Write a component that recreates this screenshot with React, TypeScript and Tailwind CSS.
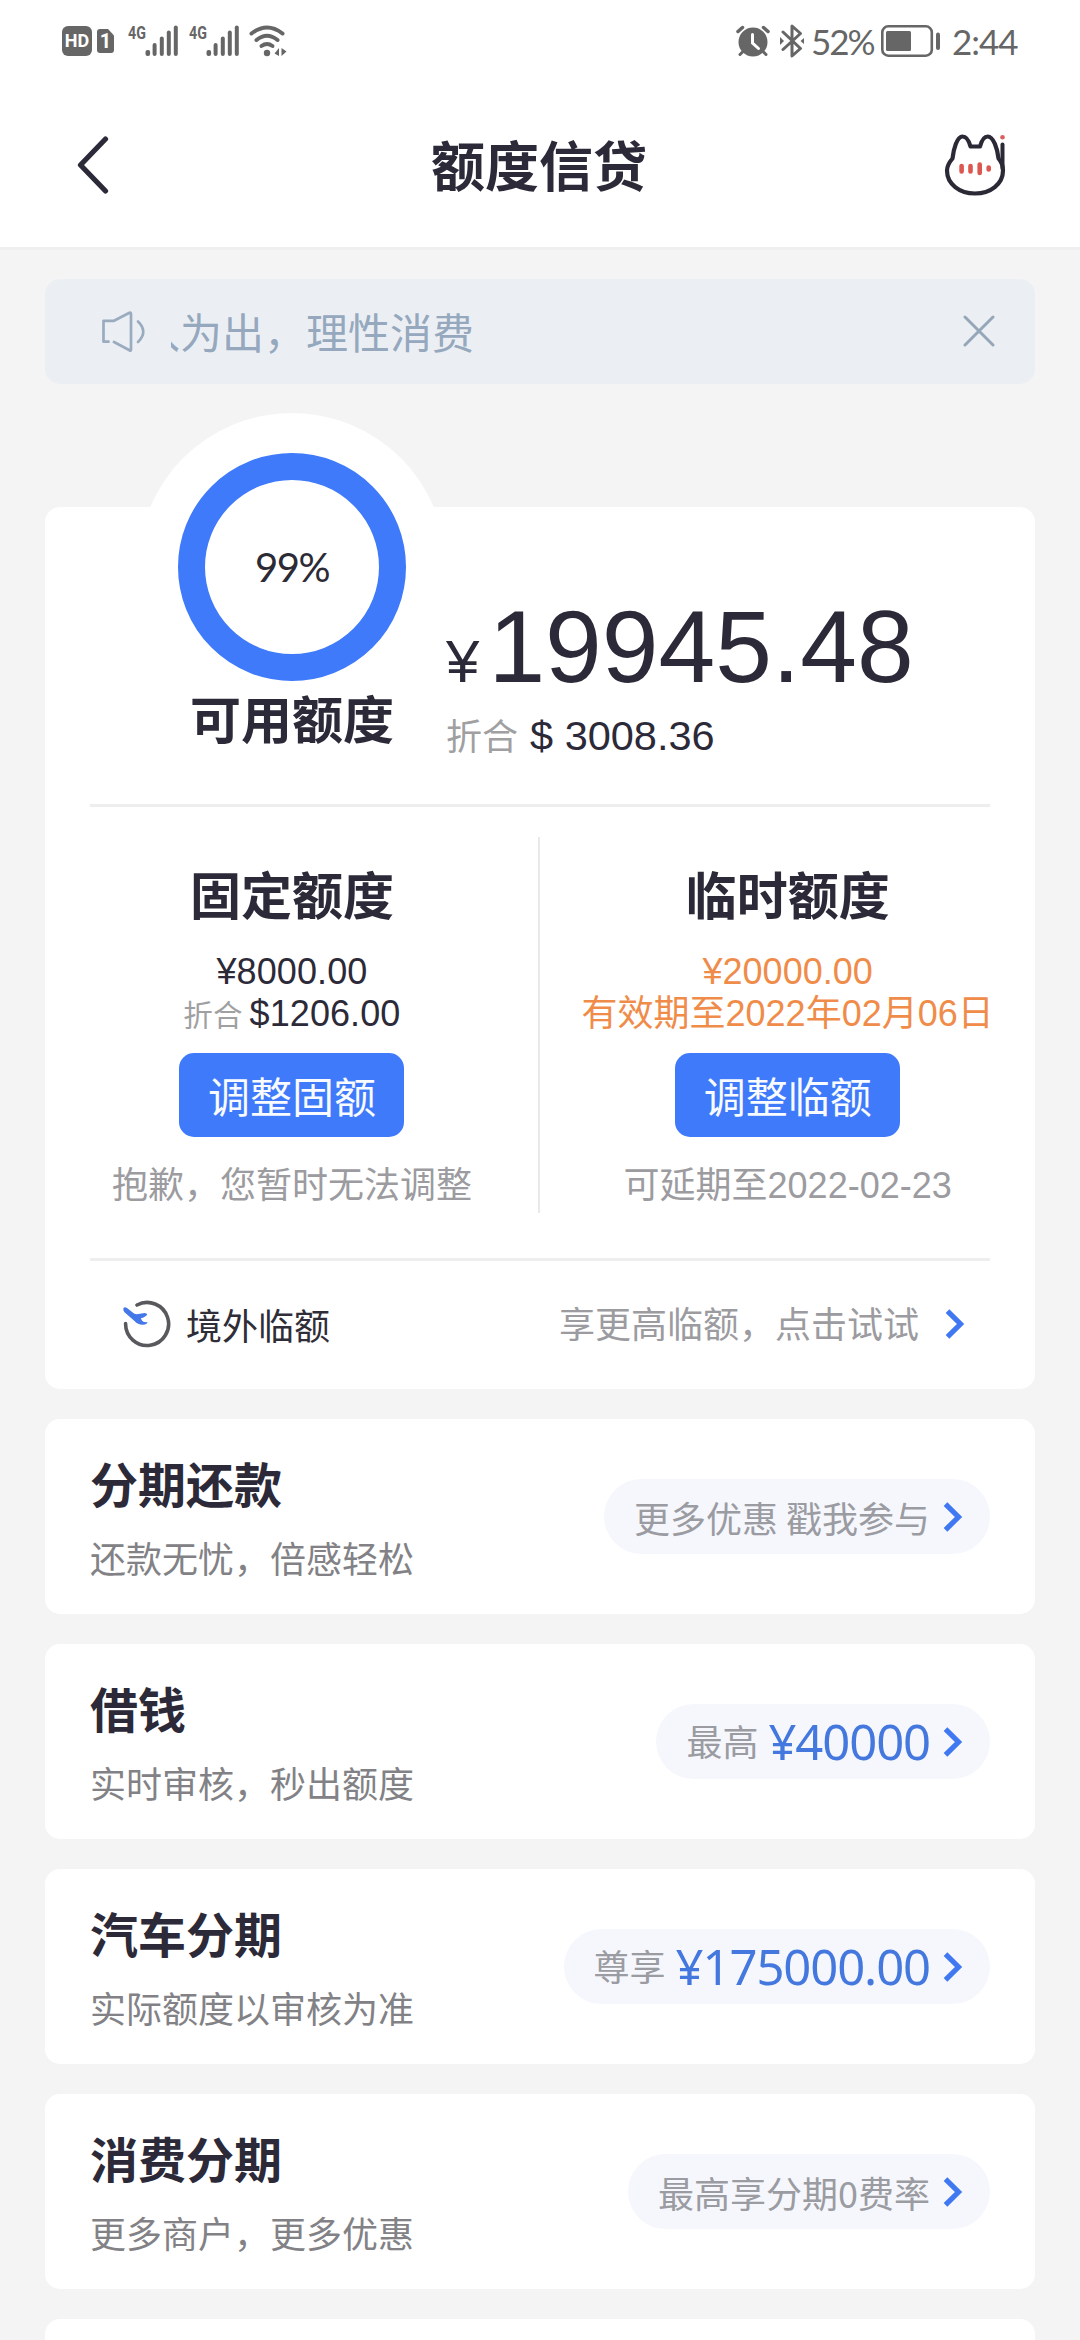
import React from "react";

const CJK = "font-['Noto_Sans_CJK_SC',sans-serif]";
const ARIAL = "font-['Liberation_Sans','Noto_Sans_CJK_SC',sans-serif]";

function SignalBars() {
  return (
    <svg width="33" height="32" viewBox="0 0 33 32" className="shrink-0 fill-[#666]">
      <rect x="0.5" y="25" width="4.6" height="6" rx="2" />
      <rect x="7.6" y="18" width="4" height="13" rx="2" />
      <rect x="14.8" y="11.5" width="4" height="19.5" rx="2" />
      <rect x="21.8" y="5.5" width="4" height="25.5" rx="2" />
      <rect x="28.8" y="0.5" width="4" height="30.5" rx="2" />
    </svg>
  );
}

function Signal() {
  return (
    <div className="flex h-8 w-[50px] items-start">
      <span className="w-[17px] shrink-0 origin-top-left scale-x-[0.75] font-['Roboto',sans-serif] text-[19px] leading-[15px] font-bold">
        4G
      </span>
      <SignalBars />
    </div>
  );
}

function StatusBar() {
  return (
    <div className="flex h-[82px] items-center justify-between pr-[63px] pl-[62px] text-[#666]">
      <div className="flex items-center">
        <div className="flex h-[30px] w-[30px] items-center justify-center rounded-[6px] bg-[#666] font-['Roboto',sans-serif] text-[18px] leading-none font-bold text-white">
          HD
        </div>
        <div className="relative ml-[5px] flex h-6 w-[17px] items-center justify-center">
          <svg width="17" height="24" viewBox="0 0 17 24" className="absolute inset-0 fill-[#666]">
            <path d="M3 0H11L17 6.500V21A3 3 0 0 1 14 24H3A3 3 0 0 1 0 21V3A3 3 0 0 1 3 0Z" />
          </svg>
          <span className="relative font-['Roboto',sans-serif] text-[20px] leading-none font-bold text-white">1</span>
        </div>
        <div className="ml-[14px]">
          <Signal />
        </div>
        <div className="ml-[11px]">
          <Signal />
        </div>
        <svg width="39" height="32" viewBox="0 0 39 32" className="ml-[10px]" fill="none" stroke="#666" strokeWidth="4" strokeLinecap="round">
          <path d="M2.500 8.500Q18 -3.500 33.500 8.500" />
          <path d="M7.500 15Q18 6.500 28.500 15" />
          <path d="M12.500 21Q18 17 23.500 21" />
          <circle cx="18" cy="28" r="3.200" fill="#666" stroke="none" />
          <path d="M30 23V31L25.500 28.500ZM32.500 23V31L37.500 26.500Z" fill="#666" stroke="none" />
        </svg>
      </div>
      <div className="flex items-center">
        <svg width="34" height="32" viewBox="0 0 34 32" fill="none" stroke="#666" strokeLinecap="round">
          <circle cx="17" cy="17" r="14.500" fill="#666" stroke="none" />
          <path d="M2 6.500L6.500 2.500M32 6.500L27.500 2.500" strokeWidth="3.500" />
          <path d="M6.500 27L4 29.500M27.500 27L30 29.500" strokeWidth="3" />
          <path d="M16.500 9.500V18L22.500 23.500" stroke="#fff" strokeWidth="3" />
        </svg>
        <svg width="26" height="34" viewBox="0 0 26 34" className="ml-[9px]" fill="none" stroke="#666" strokeWidth="3" strokeLinecap="round" strokeLinejoin="round">
          <path d="M4 8L21.500 24.500L13 32V2L21.500 9.500L4 25.500" />
          <path d="M1 13V21L5 17ZM25 14V20L21.500 17Z" fill="#666" stroke="none" />
        </svg>
        <span className="ml-[6px] w-[62px] font-['Lato',sans-serif] text-[35px] leading-[40px] tracking-[-2px] whitespace-nowrap">
          52%
        </span>
        <svg width="60" height="32" viewBox="0 0 60 32" className="ml-[8px] fill-[#666]">
          <rect x="1.300" y="1.300" width="49.500" height="29.400" rx="6" fill="none" stroke="#666" strokeWidth="2.600" />
          <rect x="5" y="6" width="25" height="20" rx="1.500" />
          <rect x="55" y="7.500" width="4" height="17.500" rx="2" />
        </svg>
        <span className="ml-[11px] w-[65px] font-['Lato',sans-serif] text-[35px] leading-[40px] tracking-[-1px] whitespace-nowrap">
          2:44
        </span>
      </div>
    </div>
  );
}

function CatIcon() {
  return (
    <svg width="64" height="64" viewBox="943 133 64 64" fill="none" strokeLinecap="round" strokeLinejoin="round">
      <path
        d="M952.500 158.500C953.500 149 957 136.500 962.500 136.500C966.500 136.500 969 141 970.500 146.500H980C981.500 141 984 136.500 987.700 136.500C993.500 136.500 997.500 149 998.500 158.500C1001.500 162 1003 166.500 1003 170.500C1003 184 990.500 193.500 975 193.500C959.500 193.500 947 184 947 170.500C947 166 949.500 162 952.500 158.500Z"
        stroke="#2b2936"
        strokeWidth="4.200"
      />
      <path d="M1002.500 144.500V168" stroke="#2b2936" strokeWidth="4" />
      <circle cx="1002.500" cy="137.300" r="2.300" fill="#d9605c" />
      <path d="M961.600 166V171.500M970.500 166V171.500M979.700 164.500V173M988.700 167.500V169.500" stroke="#dc5750" strokeWidth="4.600" />
    </svg>
  );
}

function Chevron() {
  return (
    <svg width="20" height="30" viewBox="0 0 20 30" fill="none" stroke="#4078f2" strokeWidth="5.200">
      <path d="M2.500 2.200L15.500 15L2.500 27.800" />
    </svg>
  );
}

function Notice() {
  return (
    <div className="flex h-[105px] items-center rounded-[15px] bg-[#ebeff4] pr-[40px] pl-[56px] text-[#95a8bd]">
      <svg width="44" height="42" viewBox="101 311 44 42" fill="none" stroke="#9aabbf" strokeWidth="2.700" strokeLinecap="round" strokeLinejoin="round">
        <path d="M108.500 341.700H103.500V320.800H114L129.500 312.800Q131 312.200 131 314V349.500Q131 351.200 129.500 350.300L114 342" />
        <path d="M138 321.500Q148.500 331.700 138 342" />
      </svg>
      <div className="ml-[26px] flex-1 overflow-hidden">
        <div className="-mt-px -ml-[33px] text-[42px] leading-[60px] whitespace-nowrap">入为出，理性消费</div>
      </div>
      <svg width="32" height="32" viewBox="0 0 32 32" className="mb-[2px]" fill="none" stroke="#94a6b8" strokeWidth="3" strokeLinecap="round">
        <path d="M2 2L30 30M30 2L2 30" />
      </svg>
    </div>
  );
}

function AdjustButton({ label }: { label: string }) {
  return (
    <button className="mt-[18px] h-[84px] w-[225px] shrink-0 rounded-[15px] bg-[#3f7afa] text-[42px] leading-[84px] text-[#f8fbff]">
      {label}
    </button>
  );
}

function QuotaCard() {
  return (
    <section className="mt-[123px] flex h-[882px] flex-col rounded-[15px] bg-white px-[45px]">
      <div className="flex h-[297px]">
        <div className="ml-[48px] flex w-[308px] flex-col items-center">
          <div className="-mt-[94px] flex h-[308px] w-[308px] shrink-0 items-center justify-center rounded-full bg-white">
            <div className="flex h-[228px] w-[228px] items-center justify-center rounded-full border-[27px] border-[#3f7afa] font-['Lato',sans-serif] text-[40px] leading-none tracking-[-1.5px] text-[#2c2b35]">
              99%
            </div>
          </div>
          <h2 className="-mt-[34px] text-[51px] leading-[60px] font-bold">可用额度</h2>
        </div>
        <div className={`flex flex-col ${ARIAL}`}>
          <div className="mt-[82px] flex items-baseline leading-[116px]">
            <span className="text-[60px]">¥</span>
            <span className="ml-[9px] text-[102px]">19945.48</span>
          </div>
          <div className="-mt-[10px] flex items-baseline leading-[48px]">
            <span className={`text-[36px] text-[#a0a0a2] ${CJK}`}>折合</span>
            <span className="ml-[12px] text-[41.5px]">$ 3008.36</span>
          </div>
        </div>
      </div>

      <div className="flex h-[457px] border-y-[3px] border-[#eee]">
        <div className="flex w-[405px] flex-col items-center">
          <h3 className="mt-[56px] text-[51px] leading-[60px] font-bold">固定额度</h3>
          <div className={`mt-[28px] h-[42px] text-[36px] leading-[42px] tracking-[0.1px] ${ARIAL}`}>¥8000.00</div>
          <div className={`h-[42px] text-[36px] leading-[42px] tracking-[0.1px] whitespace-nowrap ${ARIAL}`}>
            <span className="mr-[7px] text-[29.5px] text-[#a0a0a2]">折合</span>$1206.00
          </div>
          <AdjustButton label="调整固额" />
          <p className="mt-[18px] text-[36px] leading-[54px] text-[#9b9ba0]">抱歉，您暂时无法调整</p>
        </div>
        <div className="mt-[30px] ml-[44.500px] h-[376px] w-[2px] bg-[#e9e9eb]" />
        <div className="-mr-[14px] ml-[31px] flex w-[434px] flex-col items-center">
          <h3 className="mt-[56px] text-[51px] leading-[60px] font-bold">临时额度</h3>
          <div className={`mt-[28px] h-[42px] text-[36px] leading-[42px] text-[#f08c4a] ${ARIAL}`}>¥20000.00</div>
          <div className={`h-[42px] text-[36px] leading-[42px] whitespace-nowrap text-[#f08c4a] ${ARIAL}`}>
            有效期至2022年02月06日
          </div>
          <AdjustButton label="调整临额" />
          <p className={`mt-[22px] text-[36px] leading-[54px] text-[#9b9ba0] ${ARIAL}`}>可延期至2022-02-23</p>
        </div>
      </div>

      <div className="flex flex-1 items-center pr-[25px] pb-[3px] pl-[31px]">
        <svg width="50" height="50" viewBox="121 1299 50 50" fill="none">
          <path d="M125.600 1323.500A21.500 21.500 0 1 0 137 1305" stroke="#58585d" strokeWidth="3.600" strokeLinecap="round" />
          <path
            d="M123.300 1308.500Q124.500 1306.500 127 1308L134 1313.500Q136 1314.500 138.500 1314L144.500 1313Q147 1313 147.300 1314.500Q145.500 1317.300 140.800 1318.300Q142 1321.500 144 1322L147.500 1322.200Q147 1324.600 143 1324.800Q138 1325 134.500 1321L124.500 1312.300Q123 1310.500 123.300 1308.500Z"
            fill="#4478e8"
          />
        </svg>
        <span className="ml-[15px] text-[36px] leading-[54px] text-[#2f2e38]">境外临额</span>
        <span className="-mt-[4px] mr-[26px] ml-auto text-[36px] leading-[54px] text-[#9b9ba0]">享更高临额，点击试试</span>
        <Chevron />
      </div>
    </section>
  );
}

type Product = { title: string; subtitle: string; note: string; amount?: string };

const products: Product[] = [
  { title: "分期还款", subtitle: "还款无忧，倍感轻松", note: "更多优惠 戳我参与" },
  { title: "借钱", subtitle: "实时审核，秒出额度", note: "最高", amount: "¥40000" },
  { title: "汽车分期", subtitle: "实际额度以审核为准", note: "尊享", amount: "¥175000.00" },
  { title: "消费分期", subtitle: "更多商户，更多优惠", note: "最高享分期0费率" },
];

function ProductCard({ title, subtitle, note, amount }: Product) {
  return (
    <section className="flex h-[195px] shrink-0 items-center justify-between rounded-[15px] bg-white px-[45px]">
      <div>
        <h3 className="mt-[3px] text-[48px] leading-[66px] font-bold">{title}</h3>
        <p className="mt-[12px] text-[36px] leading-[60px] text-[#828286]">{subtitle}</p>
      </div>
      <div className="flex h-[75px] items-center rounded-full bg-[#f5f7fc] pr-[27px] pl-[30px]">
        {amount ? (
          <>
            <span className="-mt-[4px] text-[36px] leading-[54px] text-[#9b9ba2]">{note}</span>
            <span className="-mt-[1px] ml-[10px] font-['Noto_Sans',sans-serif] text-[49px] leading-[60px] tracking-[-1.100px] text-[#4478de]">
              {amount}
            </span>
          </>
        ) : (
          <span className="text-[36px] leading-[54px] text-[#9b9ba2]">{note}</span>
        )}
        <span className="ml-[13px]">
          <Chevron />
        </span>
      </div>
    </section>
  );
}

export default function App() {
  return (
    <main className={`flex h-[2340px] w-[1080px] flex-col overflow-hidden bg-[#f4f4f4] text-[#2c2a38] ${CJK}`}>
      <header className="h-[250px] shrink-0 border-b-[3px] border-[#efefef] bg-white">
        <StatusBar />
        <div className="flex h-[166px] items-center justify-between pr-[73px] pl-[77px]">
          <svg width="64" height="58" viewBox="0 0 64 58" fill="none" stroke="#2b2a38" strokeWidth="5.200" strokeLinecap="round" strokeLinejoin="round">
            <path d="M28.500 3L3.500 29L28.500 55" />
          </svg>
          <h1 className="-mt-[2px] mr-[6px] text-[54px] leading-[70px] font-bold">额度信贷</h1>
          <CatIcon />
        </div>
      </header>
      <div className="flex flex-col px-[45px] pt-[29px]">
        <Notice />
        <QuotaCard />
        <div className="mt-[30px] flex flex-col gap-[30px]">
          {products.map((p) => (
            <ProductCard key={p.title} {...p} />
          ))}
          <section className="h-[195px] shrink-0 rounded-[15px] bg-white" />
        </div>
      </div>
    </main>
  );
}
